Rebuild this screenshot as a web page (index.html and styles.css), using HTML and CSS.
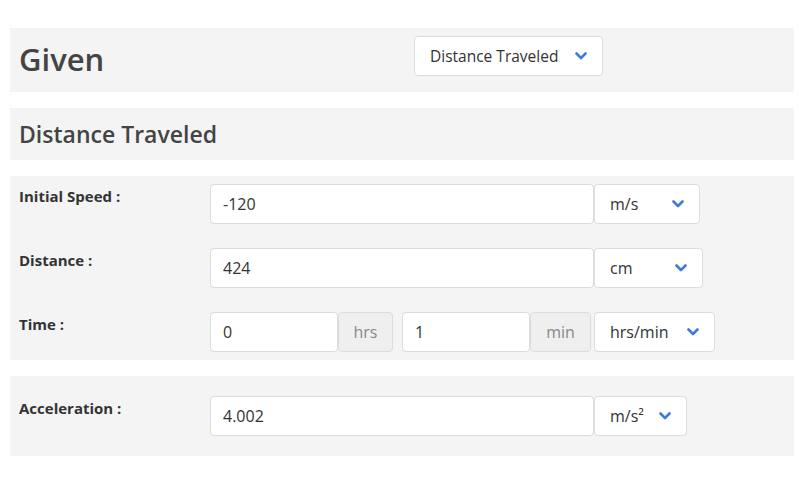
FILE: index.html
```html
<!DOCTYPE html>
<html>
<head>
<meta charset="utf-8">
<link rel="stylesheet" href="styles.css">
</head>
<body>
<div class="page">
  <section class="panel head">
    <h1 class="title">Given</h1>
    <div class="head-right">
      <div class="select sel-given"><span>Distance Traveled</span><svg class="chev" viewBox="0 0 12 8"><path d="M1.5 1.5 L6 6 L10.5 1.5"/></svg></div>
    </div>
  </section>
  <section class="panel sub">
    <h2 class="subtitle">Distance Traveled</h2>
  </section>
  <section class="panel fields">
    <div class="row">
      <div class="label">Initial Speed :</div>
      <div class="controls">
        <div class="input wide">-120</div>
        <div class="select sel-ms"><span>m/s</span><svg class="chev" viewBox="0 0 12 8"><path d="M1.5 1.5 L6 6 L10.5 1.5"/></svg></div>
      </div>
    </div>
    <div class="row">
      <div class="label">Distance :</div>
      <div class="controls">
        <div class="input wide">424</div>
        <div class="select sel-cm"><span>cm</span><svg class="chev" viewBox="0 0 12 8"><path d="M1.5 1.5 L6 6 L10.5 1.5"/></svg></div>
      </div>
    </div>
    <div class="row">
      <div class="label">Time :</div>
      <div class="controls">
        <div class="group">
          <div class="input narrow">0</div>
          <div class="addon addon-hrs">hrs</div>
        </div>
        <div class="group g2">
          <div class="input narrow">1</div>
          <div class="addon addon-min">min</div>
        </div>
        <div class="select sel-hm"><span>hrs/min</span><svg class="chev" viewBox="0 0 12 8"><path d="M1.5 1.5 L6 6 L10.5 1.5"/></svg></div>
      </div>
    </div>
  </section>
  <section class="panel fields single">
    <div class="row">
      <div class="label">Acceleration :</div>
      <div class="controls">
        <div class="input wide">4.002</div>
        <div class="select sel-ms2"><span>m/s²</span><svg class="chev" viewBox="0 0 12 8"><path d="M1.5 1.5 L6 6 L10.5 1.5"/></svg></div>
      </div>
    </div>
  </section>
</div>
</body>
</html>
```

FILE: styles.css
```css
* { box-sizing: border-box; }
html, body { margin: 0; padding: 0; background: #fff; }
body { font-family: "Open Sans", "DejaVu Sans", sans-serif; color: #333; }
.page { padding: 28px 5px 0 10px; display: flex; flex-direction: column; gap: 16px; }
.panel { background: #f4f4f4; }
.head { height: 64px; display: grid; grid-template-columns: 1fr 1fr; align-items: start; }
.title { margin: 16px 0 0 9px; font-size: 31px; font-weight: 600; color: #444; line-height: 1; }
.head-right { padding: 8px 0 0 12px; }
.sub { height: 52px; display: flex; align-items: center; }
.subtitle { margin: 0 0 0 9px; font-size: 23px; font-weight: 600; color: #444; line-height: 1; }
.fields { padding: 8px 0; display: flex; flex-direction: column; gap: 24px; }
.fields.single { padding: 20px 0; }
.row { display: flex; height: 40px; }
.label { width: 200px; padding-left: 9px; padding-top: 2px; font-size: 15px; font-weight: 700; color: #333; line-height: 20px; }
.controls { display: flex; align-items: stretch; }
.input { height: 40px; background: #fff; border: 1px solid #dcdcdc; border-radius: 4px; padding: 0 12px; display: flex; align-items: center; font-size: 16px; color: #333; }
.input.wide { width: 384px; }
.input.narrow { width: 128px; }
.group { display: flex; }
.g2 { margin-left: 9px; }
.addon { height: 40px; background: #efefef; border: 1px solid #dcdcdc; border-radius: 4px; display: flex; align-items: center; justify-content: center; font-size: 16px; color: #888; }
.addon-hrs { width: 55px; }
.addon-min { width: 61px; }
.select { height: 40px; background: #fff; border: 1px solid #dcdcdc; border-radius: 4px; padding: 0 15px 0 15px; display: flex; align-items: center; justify-content: space-between; font-size: 16px; color: #333; }
.sel-given { font-size: 15.5px; }
.chev { width: 12px; height: 8px; flex: none; }
.chev path { fill: none; stroke: #3a7bdc; stroke-width: 2.6; stroke-linecap: round; stroke-linejoin: round; }
.sel-given { width: 189px; }
.sel-ms { width: 106px; }
.sel-cm { width: 109px; }
.sel-hm { width: 121px; margin-left: 3px; }
.sel-ms2 { width: 93px; }
```
